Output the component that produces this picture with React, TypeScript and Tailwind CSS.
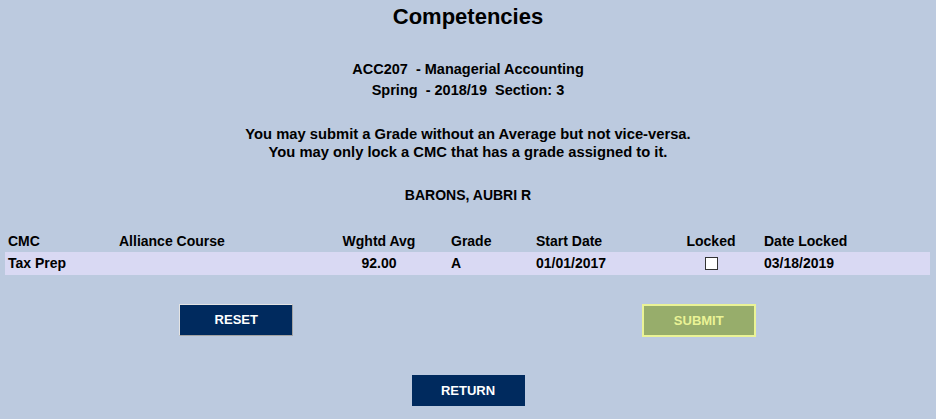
import React from "react";

const cols = "grid grid-cols-[111px_194px_138px_85px_128px_100px_169px]";

const App: React.FC = () => {
  return (
    <div
      className="min-h-[419px] w-full bg-[#bccadf] text-black font-bold"
      style={{ fontFamily: '"Liberation Sans", Arial, sans-serif' }}
    >
      {/* Heading block */}
      <div className="pt-[5px] text-center">
        <h1 className="text-[22px] leading-[24px]">Competencies</h1>
        <div className="mt-[30px] text-[14.5px] leading-[21px]">
          <p>ACC207&nbsp;&nbsp;- Managerial Accounting</p>
          <p>Spring&nbsp; - 2018/19&nbsp; Section: 3</p>
        </div>
        <div className="mt-[24px] text-[14.75px] leading-[18px]">
          <p>You may submit a Grade without an Average but not vice-versa.</p>
          <p>You may only lock a CMC that has a grade assigned to it.</p>
        </div>
        <p className="mt-[25px] text-[14px] leading-[18px]">BARONS, AUBRI R</p>
      </div>

      {/* Grades table */}
      <div className="mx-[5px] mt-[26px] w-[925px] text-[14px]">
        <div className={`${cols} h-[22px] items-center`}>
          <div className="px-[3px]">CMC</div>
          <div className="px-[3px]">Alliance Course</div>
          <div className="px-[3px] text-center">Wghtd Avg</div>
          <div className="px-[3px]">Grade</div>
          <div className="px-[3px]">Start Date</div>
          <div className="px-[3px] text-center">Locked</div>
          <div className="px-[3px]">Date Locked</div>
        </div>
        <div className={`${cols} h-[23px] items-center bg-[#d9d9f3]`}>
          <div className="px-[3px]">Tax Prep</div>
          <div className="px-[3px]"></div>
          <div className="px-[3px] text-center">92.00</div>
          <div className="px-[3px]">A</div>
          <div className="px-[3px]">01/01/2017</div>
          <div className="flex justify-center px-[3px]">
            <span className="block h-[13px] w-[13px] border border-[#333] bg-white" />
          </div>
          <div className="px-[3px]">03/18/2019</div>
        </div>

        {/* Action buttons */}
        <div className="mt-[29px] grid grid-cols-2">
          <div className="flex justify-center">
            <button className="h-[32px] w-[114px] border border-t-[#e4e4e4] border-l-[#e4e4e4] border-r-[#a3a3a3] border-b-[#a3a3a3] bg-[#002a5e] text-[13px] font-bold text-white">
              RESET
            </button>
          </div>
          <div className="flex justify-center">
            <button className="h-[33px] w-[114px] border-2 border-[#eaf396] bg-[#97ad6b] text-[13px] font-bold text-[#eaf396]">
              SUBMIT
            </button>
          </div>
        </div>
      </div>

      <div className="mt-[38px] flex justify-center">
        <button className="h-[31px] w-[113px] bg-[#002a5e] text-[13px] font-bold text-white">
          RETURN
        </button>
      </div>
    </div>
  );
};

export default App;
